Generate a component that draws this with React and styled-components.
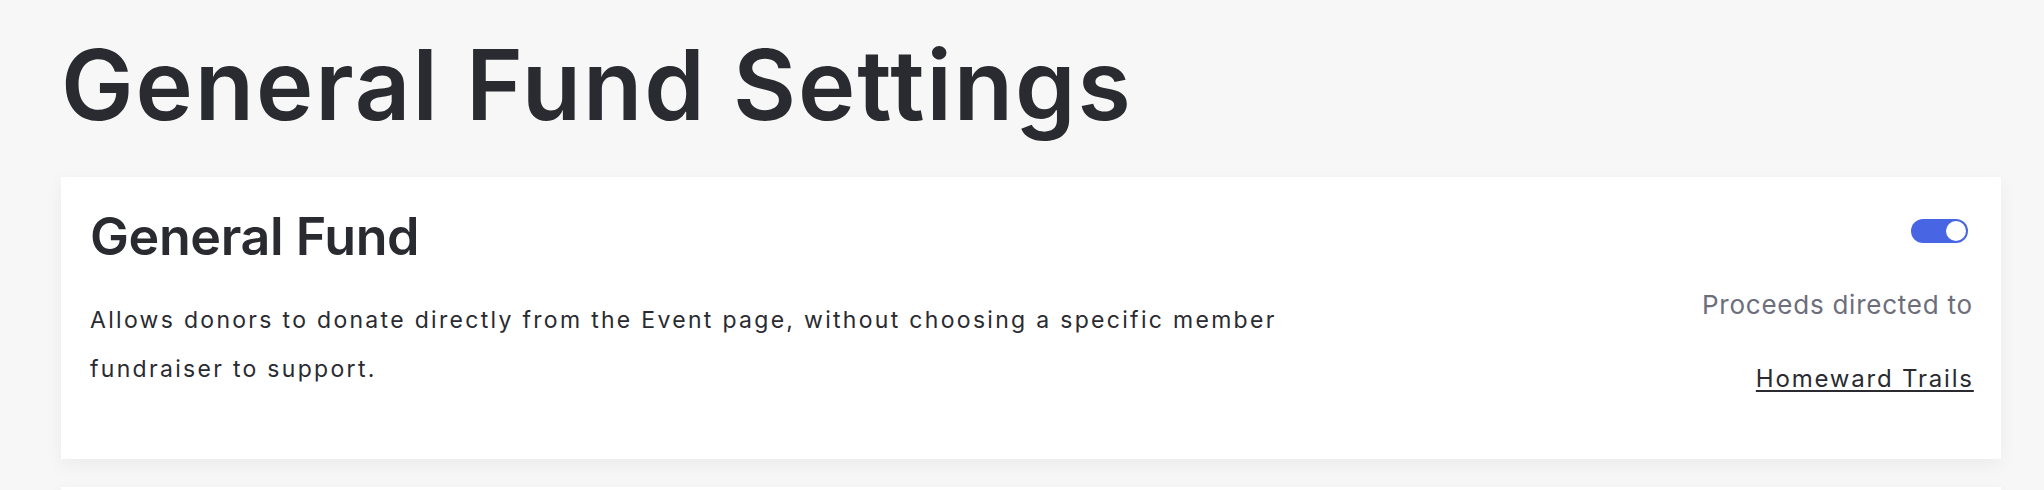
import React from "react";
import styled, { createGlobalStyle } from "styled-components";

const GlobalStyle = createGlobalStyle`
  html, body {
    margin: 0;
    padding: 0;
    background: #f7f7f7;
  }
  body {
    font-family: Inter, "Liberation Sans", Arial, sans-serif;
    color: #2a2b31;
    -webkit-font-smoothing: antialiased;
  }
`;

const Page = styled.main`
  padding: 36px 43px 0 61px;
  display: flex;
  flex-direction: column;
`;

const Title = styled.h1`
  margin: 0 0 44px 0;
  font-size: 97px;
  line-height: 97px;
  font-weight: 600;
  letter-spacing: 1.9px;
  color: #2a2b31;
`;

const Cards = styled.div`
  display: flex;
  flex-direction: column;
  gap: 28px;
`;

const Card = styled.section`
  background: #ffffff;
  box-shadow: 0 6px 18px rgba(0, 0, 0, 0.05);
  padding: 29px 29px ${(p) => p.$padBottom || 29}px 29px;
  display: flex;
  justify-content: space-between;
  align-items: flex-start;
  min-height: ${(p) => p.$minHeight || 0}px;
`;

const Main = styled.div`
  display: flex;
  flex-direction: column;
`;

const CardTitle = styled.h2`
  margin: 0 0 28px 0;
  font-size: 52px;
  line-height: 62px;
  font-weight: 600;
  letter-spacing: -0.4px;
  color: #2a2b31;
`;

const Description = styled.p`
  margin: 0;
  max-width: 1215px;
  font-size: 23px;
  line-height: 49px;
  font-weight: 400;
  letter-spacing: 2.3px;
  color: #2a2b31;
`;

const Side = styled.div`
  display: flex;
  flex-direction: column;
  align-items: flex-end;
`;

const Toggle = styled.button`
  margin: 13px 4px 42px 0;
  width: 57px;
  height: 24px;
  border-radius: 12px;
  border: none;
  padding: 2px;
  background: ${(p) => (p.$on ? "#4866e4" : "#c9cad1")};
  display: flex;
  justify-content: ${(p) => (p.$on ? "flex-end" : "flex-start")};
  align-items: center;
  cursor: pointer;
`;

const Knob = styled.span`
  width: 20px;
  height: 20px;
  border-radius: 50%;
  background: #ffffff;
`;

const Label = styled.div`
  font-size: 26px;
  line-height: 39px;
  letter-spacing: 0.75px;
  margin-right: -0.75px;
  color: #6c6e7c;
  margin-bottom: 37px;
`;

const OrgLink = styled.a`
  font-size: 24px;
  line-height: 36px;
  letter-spacing: 1.8px;
  margin-right: -1.8px;
  color: #2a2b31;
  text-decoration: underline;
  text-decoration-thickness: 2px;
  text-underline-offset: 3px;
  cursor: pointer;
`;

export default function App() {
  return (
    <>
      <GlobalStyle />
      <Page>
        <Title>General Fund Settings</Title>
        <Cards>
          <Card $padBottom={62}>
            <Main>
              <CardTitle>General Fund</CardTitle>
              <Description>
                Allows donors to donate directly from the Event page, without
                choosing a specific member fundraiser to support.
              </Description>
            </Main>
            <Side>
              <Toggle $on aria-label="General Fund enabled">
                <Knob />
              </Toggle>
              <Label>Proceeds directed to</Label>
              <OrgLink>Homeward Trails</OrgLink>
            </Side>
          </Card>
          <Card $minHeight={200} />
        </Cards>
      </Page>
    </>
  );
}
